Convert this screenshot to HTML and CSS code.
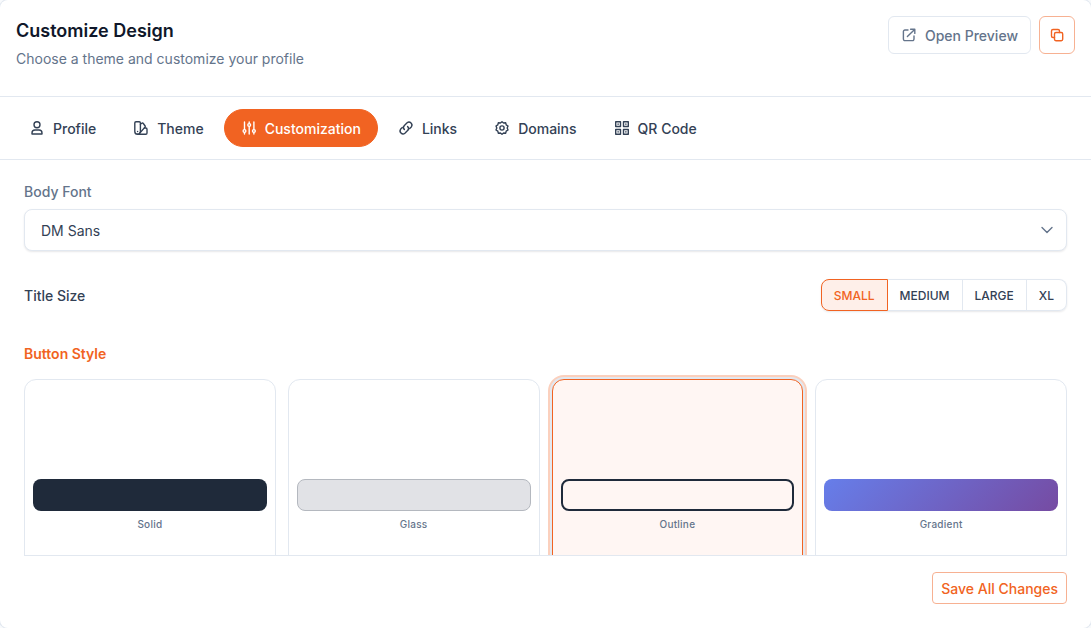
FILE: index.html
```html
<!DOCTYPE html>
<html lang="en">
<head>
    <meta charset="utf-8" />
    <meta name="viewport" content="width=device-width, initial-scale=1" />
    <title>Customize Design</title>
    <link rel="stylesheet" href="styles.css">
</head>
<body>
    <div class="panel">
        <header class="panel-header">
            <div>
                <h1 class="title">Customize Design</h1>
                <p class="subtitle">Choose a theme and customize your profile</p>
            </div>
            <div class="actions">
                <a class="btn btn-preview" href="#preview">
                    <svg class="icon" viewBox="0 0 16 16" aria-hidden="true">
                        <path d="M7 3H3.900a1.500 1.500 0 0 0-1.500 1.500v7.600a1.500 1.500 0 0 0 1.500 1.500h7.600a1.500 1.500 0 0 0 1.500-1.500V9" />
                        <path d="M9.600 2.200h4.200v4.200M13.600 2.400L6.400 9.600" />
                    </svg>
                    Open Preview
                </a>
                <button class="btn btn-copy" type="button" aria-label="Copy link">
                    <svg class="icon" viewBox="0 0 16 16" aria-hidden="true">
                        <rect x="5.500" y="5.500" width="8.200" height="8.200" rx="1.400" />
                        <path d="M5.500 10.500H4A1.500 1.500 0 0 1 2.500 9V4A1.500 1.500 0 0 1 4 2.500h5A1.500 1.500 0 0 1 10.500 4v1.500" />
                    </svg>
                </button>
            </div>
        </header>

        <nav class="tabs">
            <a class="tab" href="#profile">
                <svg class="icon" viewBox="0 0 16 16" aria-hidden="true">
                    <circle cx="8" cy="4.800" r="3" />
                    <path d="M3 14v-1a3 3 0 0 1 3-3h4a3 3 0 0 1 3 3v1z" />
                </svg>
                Profile
            </a>
            <a class="tab" href="#theme">
                <svg class="icon" viewBox="0 0 16 16" aria-hidden="true">
                    <path d="M1.800 3A1.200 1.200 0 0 1 3 1.800h3.200A1.200 1.200 0 0 1 7.400 3v8.400a2.800 2.800 0 0 1-5.600 0z" />
                    <path d="M7.400 4.200l1.200-.9a1.200 1.200 0 0 1 1.700.2L12 5.700a1.200 1.200 0 0 1-.2 1.700l-5.200 5.800" />
                    <path d="M11.400 8h1.400A1.200 1.200 0 0 1 14 9.200V13a1.200 1.200 0 0 1-1.200 1.200H4.600" />
                    <path d="M4.600 11.400v.1" />
                </svg>
                Theme
            </a>
            <a class="tab active" href="#customization" aria-current="page">
                <svg class="icon" viewBox="0 0 16 16" aria-hidden="true">
                    <path d="M3.500 2v7.400M3.500 12.600V14M8.200 2v1.400M8.200 6.600V14M12.900 2v7.400M12.900 12.600V14" />
                    <circle cx="3.500" cy="11" r="1.400" />
                    <circle cx="8.200" cy="5" r="1.400" />
                    <circle cx="12.900" cy="11" r="1.400" />
                </svg>
                Customization
            </a>
            <a class="tab" href="#links">
                <svg class="icon" viewBox="0 0 16 16" aria-hidden="true">
                    <path d="M6.400 9.600a3 3 0 0 1 0-4.200l2.700-2.700a3 3 0 0 1 4.200 4.200l-1.600 1.600" />
                    <path d="M9.600 6.400a3 3 0 0 1 0 4.200l-2.700 2.700a3 3 0 0 1-4.200-4.200l1.600-1.600" />
                </svg>
                Links
            </a>
            <a class="tab" href="#domains">
                <svg class="icon" viewBox="0 0 16 16" aria-hidden="true">
                    <path d="M8 1.700l1.600 1.300 2.100-.2.500 2 1.800 1.200-.8 2 .8 2-1.800 1.200-.5 2-2.100-.2L8 14.300 6.400 13l-2.100.2-.5-2L2 10l.8-2L2 6l1.800-1.200.5-2 2.100.2z" />
                    <circle cx="8" cy="8" r="2.100" />
                </svg>
                Domains
            </a>
            <a class="tab" href="#qr-code">
                <svg class="icon" viewBox="0 0 16 16" aria-hidden="true">
                    <path d="M1.700 1.700h4.800v4.800H1.700zM9.500 1.700h4.800v4.800H9.500zM1.700 9.500h4.800v4.800H1.700zM9.500 9.500h4.800v4.800H9.500z" />
                    <path d="M4.100 4v.2M11.900 4v.2M4.100 11.800v.2M11.900 11.800v.2" />
                </svg>
                QR Code
            </a>
        </nav>

        <main class="content">
            <label class="label" for="body-font">Body Font</label>
            <div class="select-wrap">
                <select class="select" id="body-font">
                    <option>DM Sans</option>
                    <option>Inter</option>
                    <option>Roboto</option>
                </select>
                <svg class="icon chevron" viewBox="0 0 16 16" aria-hidden="true">
                    <path d="M3 5.500l5 5 5-5" />
                </svg>
            </div>

            <div class="row">
                <span class="row-label" id="title-size">Title Size</span>
                <div class="segments" role="group" aria-labelledby="title-size">
                    <button class="segment selected" type="button" aria-pressed="true">Small</button>
                    <button class="segment" type="button">Medium</button>
                    <button class="segment" type="button">Large</button>
                    <button class="segment" type="button">XL</button>
                </div>
            </div>

            <h2 class="section-title">Button Style</h2>
            <div class="cards">
                <button class="card" type="button">
                    <span class="swatch solid"></span>
                    <span class="card-name">Solid</span>
                </button>
                <button class="card" type="button">
                    <span class="swatch glass"></span>
                    <span class="card-name">Glass</span>
                </button>
                <button class="card selected" type="button" aria-pressed="true">
                    <span class="swatch outline"></span>
                    <span class="card-name">Outline</span>
                </button>
                <button class="card" type="button">
                    <span class="swatch gradient"></span>
                    <span class="card-name">Gradient</span>
                </button>
            </div>
        </main>

        <footer class="panel-footer">
            <button class="btn btn-save" type="button">Save All Changes</button>
        </footer>
    </div>
</body>
</html>
```
FILE: styles.css
```css
* {
    box-sizing: border-box;
}

body {
    margin: 0;
    background-color: #f8fafc;
    font-family: Inter, "Liberation Sans", sans-serif;
    font-size: 14px;
    line-height: 20px;
    color: #334155;
}

button, select {
    font-family: inherit;
    cursor: pointer;
}

a {
    color: inherit;
    text-decoration: none;
}

.panel {
    display: flex;
    flex-direction: column;
    height: 100vh;
    background-color: white;
    border-radius: 8px;
    box-shadow: 0 0 0 1px #e2e8f0;
    overflow: hidden;
}

.icon {
    width: 16px;
    height: 16px;
    flex-shrink: 0;
    fill: none;
    stroke: currentColor;
    stroke-width: 1.4;
    stroke-linecap: round;
    stroke-linejoin: round;
}

/* header */
.panel-header {
    display: flex;
    justify-content: space-between;
    align-items: flex-start;
    padding: 16px 16px 27px;
    border-bottom: 1px solid #e2e8f0;
}

.title {
    margin: 0 0 4px;
    font-size: 18px;
    line-height: 29px;
    font-weight: 600;
    color: #0f172a;
}

.subtitle {
    margin: 0;
    color: #64748b;
}

.actions {
    display: flex;
    gap: 8px;
}

.btn {
    display: flex;
    align-items: center;
    justify-content: center;
    gap: 8px;
    background-color: white;
    border: 1px solid #f7b192;
    border-radius: 6px;
    color: #f16322;
    font-size: 14px;
    line-height: 20px;
    font-weight: 500;
}

.btn-preview {
    padding: 9px 12px 7px;
    border-color: #e2e8f0;
    color: #64748b;
}

.btn-copy {
    width: 36px;
    padding: 0;
}

.btn-save {
    padding: 6px 8px 4px;
    border-radius: 4px;
}

.btn-preview .icon, .tab .icon {
    margin-bottom: 2px;
}

/* tabs */
.tabs {
    display: flex;
    gap: 3px;
    padding: 12px;
    border-bottom: 1px solid #e2e8f0;
}

.tab {
    display: flex;
    align-items: center;
    gap: 8px;
    padding: 9px 16px 7px;
    border: 1px solid transparent;
    border-radius: 20px;
    font-weight: 500;
}

.tab.active {
    background-color: #f16322;
    border-color: #f16322;
    color: white;
}

/* content */
.content {
    flex: 1;
    min-height: 0;
    overflow: hidden;
    padding: 22px 24px 0;
}

.label {
    display: block;
    margin-bottom: 7px;
    font-weight: 500;
    color: #64748b;
}

.select-wrap {
    position: relative;
}

.select {
    display: block;
    width: 100%;
    height: 42px;
    padding: 0 40px 0 16px;
    appearance: none;
    background-color: white;
    border: 1px solid #e2e8f0;
    border-radius: 8px;
    box-shadow: 0 1px 2px rgba(15, 23, 42, 0.1);
    font-size: 14px;
    color: #334155;
}

.chevron {
    position: absolute;
    top: 13px;
    right: 12px;
    color: #64748b;
    pointer-events: none;
}

.row {
    display: flex;
    justify-content: space-between;
    align-items: center;
    margin: 28px 0 33px;
}

.row-label {
    padding-top: 2px;
    font-weight: 500;
}

.segments {
    display: flex;
    border-radius: 8px;
    box-shadow: 0 1px 2px rgba(15, 23, 42, 0.1);
}

.segment {
    height: 32px;
    padding: 0 12px;
    background-color: white;
    border: 1px solid #e2e8f0;
    border-left: 0;
    font-size: 12px;
    font-weight: 500;
    text-transform: uppercase;
    color: #334155;
}

.segment:first-child {
    border-left: 1px solid #e2e8f0;
    border-radius: 8px 0 0 8px;
}

.segment:last-child {
    border-radius: 0 8px 8px 0;
}

.segment.selected {
    background-color: #feefe9;
    border-color: #f16322;
    color: #f16322;
}

.section-title {
    margin: 0 0 15px;
    font-size: 14px;
    line-height: 20px;
    font-weight: 600;
    color: #f16322;
}

.cards {
    display: grid;
    grid-template-columns: repeat(4, 1fr);
    gap: 12px;
}

.card {
    display: flex;
    flex-direction: column;
    align-items: center;
    justify-content: center;
    gap: 6px;
    aspect-ratio: 1;
    padding: 10px 8px 8px;
    background-color: white;
    border: 1px solid #e2e8f0;
    border-radius: 12px;
}

.card.selected {
    background-color: #fff6f3;
    border-color: #f16322;
    box-shadow: 0 0 0 2px #e2e8f0, 0 0 0 4px #fbd0bd;
}

.swatch {
    width: 100%;
    height: 32px;
    border-radius: 8px;
}

.solid {
    background-color: #1f2a3a;
}

.glass {
    background-color: #e1e2e6;
    border: 1px solid #b4b8bf;
}

.outline {
    border: 2px solid #1f2a3a;
}

.gradient {
    background-image: linear-gradient(135deg, #667eea, #764ba2);
}

.card-name {
    font-size: 10px;
    line-height: 15px;
    font-weight: 500;
    letter-spacing: 0.025em;
    color: #64748b;
}

/* footer */
.panel-footer {
    display: flex;
    justify-content: flex-end;
    margin: 0 24px;
    padding: 16px 0 24px;
    border-top: 1px solid #e2e8f0;
}
```
